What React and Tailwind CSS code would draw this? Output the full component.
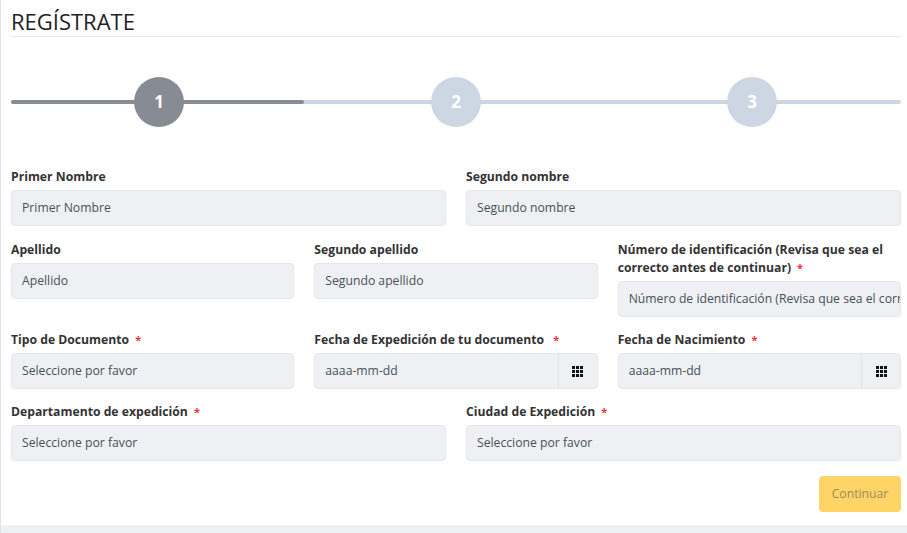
const font = { fontFamily: '"Open Sans", sans-serif' };

function Label({ children, req, className = '' }) {
  return (
    <p className={`text-[12.2px] font-bold text-[#333] leading-[18px] mb-[4px] ${className}`}>
      {children}
      {req && <span className="text-red-500 ml-[6px] text-[11px]">*</span>}
    </p>
  );
}

function Input({ text }) {
  return (
    <div className="h-9 bg-[#eef0f4] border border-[#e3e6ea] rounded flex items-center px-[10px] text-[12.2px] text-[#495057] overflow-hidden whitespace-nowrap">
      {text}
    </div>
  );
}

function Grid() {
  return (
    <svg width="11" height="11" viewBox="0 0 11 11">
      {[0, 4, 8].map((y) =>
        [0, 4, 8].map((x) => <rect key={`${x}-${y}`} x={x} y={y} width="3" height="3" fill="#111" />)
      )}
    </svg>
  );
}

function DateInput() {
  return (
    <div className="h-9 bg-[#eef0f4] border border-[#e3e6ea] rounded flex items-center text-[12.2px] text-[#495057]">
      <span className="flex-1 px-[10px]">aaaa-mm-dd</span>
      <span className="w-[39px] h-full border-l border-[#e0e3e8] flex items-center justify-center">
        <Grid />
      </span>
    </div>
  );
}

function Step({ n, active }) {
  return (
    <div
      className={`w-[50px] h-[50px] rounded-full flex items-center justify-center text-white font-bold text-[17px] ${
        active ? 'bg-[#868b94]' : 'bg-[#cdd6e3]'
      }`}
    >
      {n}
    </div>
  );
}

export default function App() {
  return (
    <div className="w-[907px] h-[533px] bg-white border-l border-[#dee2e6] overflow-hidden flex flex-col" style={font}>
      <div className="pl-[10px] pr-[6px] flex-1">
        <h1 className="text-[22px] text-[#222] pt-[6px] leading-[30px] pb-0 border-b border-[#e6e8eb]">REGÍSTRATE</h1>

        {/* stepper */}
        <div className="relative h-[50px] mt-[40px]">
          <div className="absolute left-0 right-0 top-[23px] h-[4px] rounded bg-[#cdd6e3]" />
          <div className="absolute left-0 w-[293px] top-[23px] h-[4px] rounded bg-[#868b94]" />
          <div className="absolute left-[123px] top-0"><Step n="1" active /></div>
          <div className="absolute left-[420px] top-0"><Step n="2" /></div>
          <div className="absolute left-[716px] top-0"><Step n="3" /></div>
        </div>

        <div className="grid grid-cols-2 gap-x-5 mt-[41px]">
          <div>
            <Label>Primer Nombre</Label>
            <Input text="Primer Nombre" />
          </div>
          <div>
            <Label>Segundo nombre</Label>
            <Input text="Segundo nombre" />
          </div>
        </div>

        <div className="grid grid-cols-3 gap-x-5 mt-[15px]">
          <div>
            <Label>Apellido</Label>
            <Input text="Apellido" />
          </div>
          <div>
            <Label>Segundo apellido</Label>
            <Input text="Segundo apellido" />
          </div>
          <div>
            <Label req>Número de identificación (Revisa que sea el correcto antes de continuar)</Label>
            <Input text="Número de identificación  (Revisa que sea el correcto antes de continuar)" />
          </div>
        </div>

        <div className="grid grid-cols-3 gap-x-5 mt-[14px]">
          <div>
            <Label req>Tipo de Documento</Label>
            <Input text="Seleccione por favor" />
          </div>
          <div>
            <Label req>Fecha de Expedición de tu documento&nbsp;</Label>
            <DateInput />
          </div>
          <div>
            <Label req>Fecha de Nacimiento</Label>
            <DateInput />
          </div>
        </div>

        <div className="grid grid-cols-2 gap-x-5 mt-[14px]">
          <div>
            <Label req>Departamento de expedición</Label>
            <Input text="Seleccione por favor" />
          </div>
          <div>
            <Label req>Ciudad de Expedición</Label>
            <Input text="Seleccione por favor" />
          </div>
        </div>

        <div className="flex justify-end mt-[15px]">
          <button className="w-[82px] h-9 rounded bg-[#ffd466] text-[12.2px] text-[#9a8b62]">Continuar</button>
        </div>
      </div>
      <div className="h-[8px] bg-[#eef0f4]" />
    </div>
  );
}
